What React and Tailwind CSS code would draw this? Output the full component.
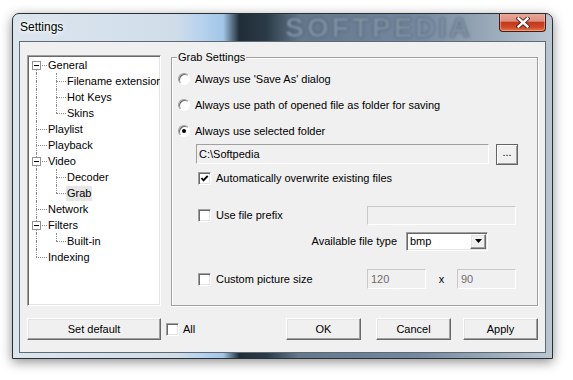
import React from "react";

const tree = [
  { label: "General", level: 0, expand: true, first: true },
  { label: "Filename extension", level: 1 },
  { label: "Hot Keys", level: 1 },
  { label: "Skins", level: 1, lastChild: true },
  { label: "Playlist", level: 0 },
  { label: "Playback", level: 0 },
  { label: "Video", level: 0, expand: true },
  { label: "Decoder", level: 1 },
  { label: "Grab", level: 1, lastChild: true, selected: true },
  { label: "Network", level: 0 },
  { label: "Filters", level: 0, expand: true },
  { label: "Built-in", level: 1, lastChild: true },
  { label: "Indexing", level: 0, last: true },
];

function Cell({ off, top, bottom, hor, horW, box }) {
  return (
    <div className="relative w-[19px] h-[16px] shrink-0">
      {top && (
        <span
          className="absolute top-0 h-[8px] w-0 border-l border-dotted border-[#8c8c8c]"
          style={{ left: off }}
        />
      )}
      {bottom && (
        <span
          className="absolute top-[8px] bottom-0 w-0 border-l border-dotted border-[#8c8c8c]"
          style={{ left: off }}
        />
      )}
      {hor && (
        <span
          className="absolute top-[8px] h-0 border-t border-dotted border-[#8c8c8c]"
          style={{ left: off, width: horW }}
        />
      )}
      {box && (
        <span className="absolute left-[4px] top-[4px] w-[9px] h-[9px] bg-white border border-[#919191]">
          <span className="absolute left-[1px] top-[3px] w-[5px] h-[1px] bg-black" />
        </span>
      )}
    </div>
  );
}

function TreeRow({ item }) {
  const { label, level, expand, first, last, lastChild, selected } = item;
  return (
    <div className="flex h-[16px] items-center">
      {level === 0 ? (
        <Cell off={8} top={!first} bottom={!last} hor horW={11} box={expand} />
      ) : (
        <Cell off={8} top bottom />
      )}
      {level === 1 && <Cell off={9} top bottom={!lastChild} hor horW={10} />}
      <span
        className={`px-[1px] h-[15px] leading-[15px] whitespace-nowrap ${
          selected ? "bg-[#e6e6e6]" : ""
        }`}
      >
        {label}
      </span>
    </div>
  );
}

function Radio({ checked }) {
  return (
    <span className="relative w-[12px] h-[12px] shrink-0 rounded-full bg-white border border-t-[#a0a0a0] border-l-[#a0a0a0] border-r-white border-b-white shadow-[inset_1px_1px_0_#696969]">
      {checked && (
        <span className="absolute left-[3px] top-[3px] w-[4px] h-[4px] rounded-full bg-black" />
      )}
    </span>
  );
}

function Check({ checked }) {
  return (
    <span className="relative w-[13px] h-[13px] shrink-0 bg-white border border-t-[#a0a0a0] border-l-[#a0a0a0] border-r-white border-b-white shadow-[inset_1px_1px_0_#696969,inset_-1px_-1px_0_#e3e3e3]">
      {checked && (
        <svg
          className="absolute left-[1px] top-[1px]"
          width="9"
          height="9"
          viewBox="0 0 9 9"
        >
          <path
            d="M1.5 4 L3.5 6.3 L7.7 1.8"
            stroke="#000"
            strokeWidth="1.9"
            fill="none"
          />
        </svg>
      )}
    </span>
  );
}

const raised =
  "border border-t-white border-l-white border-r-[#696969] border-b-[#696969] shadow-[inset_-1px_-1px_0_#a0a0a0,inset_1px_1px_0_#e3e3e3] bg-[#f0f0f0]";

const sunkenFlat =
  "border border-t-[#a0a0a0] border-l-[#a0a0a0] border-r-white border-b-white";

function Button({ children, className = "" }) {
  return (
    <div
      className={`h-[22px] flex items-center justify-center ${raised} ${className}`}
    >
      {children}
    </div>
  );
}

export default function App() {
  return (
    <div className="w-[573px] h-[380px] bg-white pl-[12px] pt-[13px] font-['Liberation_Sans',Arial,sans-serif] text-[11px] text-black overflow-hidden">
      <div className="w-[541px] h-[346px] rounded-t-[7px] border border-[#2a2f35] shadow-[0_3px_12px_rgba(0,0,0,0.45)] bg-[linear-gradient(90deg,#dbe5ee_0%,#d0dde9_30%,#b6d2ee_35%,#a2c6e8_39%,#1f2d37_42%,#2b3b47_47%,#63788b_53%,#7488a0_75%,#93a3b3_86%,#bac7d3_100%)] flex flex-col overflow-hidden">
        {/* title bar */}
        <div className="h-[27px] flex items-start relative">
          <span className="ml-[7px] mt-[5px] text-[12px] leading-[16px] text-black [text-shadow:0_0_6px_#fff,0_0_10px_#fff,0_0_3px_#fff]">
            Settings
          </span>
          <span className="ml-[222px] mt-[1px] text-[28px] leading-[26px] font-bold tracking-[3px] text-[#7d91a4] blur-[0.9px] [text-shadow:0_0_2px_#22303c]">
            SOFTPEDIA
          </span>
          <div className="ml-auto mr-[6px] -mt-[1px] w-[47px] h-[19px] rounded-b-[4px] border border-[#4a1a12] border-t-0 bg-[linear-gradient(180deg,#eaab9d_0%,#de907f_45%,#c23a1f_52%,#cf4727_78%,#e27a45_100%)] shadow-[inset_0_0_0_1px_rgba(255,210,200,0.45)] flex items-center justify-center">
            <svg width="14" height="11" viewBox="0 0 14 11">
              <path
                d="M2.5 1.5 L11.5 9.5 M11.5 1.5 L2.5 9.5"
                stroke="#4a1d16"
                strokeWidth="4.2"
                strokeLinecap="square"
              />
              <path
                d="M2.5 1.5 L11.5 9.5 M11.5 1.5 L2.5 9.5"
                stroke="#fff"
                strokeWidth="2.4"
                strokeLinecap="square"
              />
            </svg>
          </div>
        </div>

        {/* client */}
        <div className="mx-[6px] h-[312px] border border-[#5f6a75] bg-[#f0f0f0] flex flex-col pl-[7px] pt-[13px]">
          <div className="flex items-start">
            {/* tree */}
            <div className="w-[134px] h-[251px] bg-white border border-t-[#a0a0a0] border-l-[#a0a0a0] border-r-white border-b-white shadow-[inset_1px_1px_0_#696969,inset_-1px_-1px_0_#e3e3e3] pt-[1px] overflow-hidden">
              {tree.map((t) => (
                <TreeRow key={t.label} item={t} />
              ))}
            </div>

            {/* group box */}
            <div className="relative ml-[10px] mt-[2px] w-[367px] h-[249px] border border-[#a0a0a0] shadow-[inset_1px_1px_0_#fff,1px_1px_0_#fff] flex flex-col">
              <span className="absolute left-[5px] -top-[8px] px-[1px] bg-[#f0f0f0] leading-[14px]">
                Grab Settings
              </span>

              <div className="mt-[12px] h-[18px] flex items-center pl-[6px]">
                <Radio />
                <span className="ml-[5px]">Always use 'Save As' dialog</span>
              </div>
              <div className="mt-[8px] h-[18px] flex items-center pl-[6px]">
                <Radio />
                <span className="ml-[5px]">
                  Always use path of opened file as folder for saving
                </span>
              </div>
              <div className="mt-[8px] h-[18px] flex items-center pl-[6px]">
                <Radio checked />
                <span className="ml-[5px]">Always use selected folder</span>
              </div>

              <div className="mt-[4px] h-[20px] flex items-center pl-[24px]">
                <div
                  className={`w-[293px] h-[20px] ${sunkenFlat} bg-[#f0f0f0] flex items-center pl-[2px]`}
                >
                  C:\Softpedia
                </div>
                <div className="ml-[7px] w-[22px] h-[21px] flex items-center justify-center border border-[#646464] bg-[#f0f0f0] shadow-[inset_1px_1px_0_#fff,inset_-1px_-1px_0_#a0a0a0]">
                  <span className="-mt-[3px]">...</span>
                </div>
              </div>

              <div className="mt-[5px] h-[18px] flex items-center pl-[26px]">
                <Check checked />
                <span className="ml-[5px]">
                  Automatically overwrite existing files
                </span>
              </div>

              <div className="mt-[18px] h-[20px] flex items-center pl-[26px]">
                <div className="w-[169px] flex items-center">
                  <Check />
                  <span className="ml-[5px]">Use file prefix</span>
                </div>
                <div className="w-[149px] h-[19px] border border-[#c8c8c8] border-b-white border-r-white bg-[#f0f0f0]" />
              </div>

              <div className="mt-[6px] h-[20px] flex items-center justify-end pr-[49px]">
                <span>Available file type</span>
                <div className="ml-[9px] w-[82px] h-[19px] bg-white border border-t-[#a0a0a0] border-l-[#a0a0a0] border-r-white border-b-white shadow-[inset_1px_1px_0_#696969,inset_-1px_-1px_0_#e3e3e3] flex items-center pl-[3px] pr-[1px]">
                  <span className="flex-1">bmp</span>
                  <div
                    className={`w-[16px] h-[15px] ${raised} flex items-center justify-center`}
                  >
                    <svg width="7" height="4" viewBox="0 0 7 4">
                      <path d="M0 0 H7 L3.5 4 Z" fill="#000" />
                    </svg>
                  </div>
                </div>
              </div>

              <div className="mt-[18px] h-[20px] flex items-center pl-[26px]">
                <div className="w-[169px] flex items-center">
                  <Check />
                  <span className="ml-[5px]">Custom picture size</span>
                </div>
                <div className="w-[59px] h-[20px] border border-[#c8c8c8] border-b-white border-r-white bg-[#f0f0f0] text-[#6d6d6d] flex items-center pl-[3px]">
                  120
                </div>
                <span className="w-[31px] text-center">x</span>
                <div className="w-[59px] h-[20px] border border-[#c8c8c8] border-b-white border-r-white bg-[#f0f0f0] text-[#6d6d6d] flex items-center pl-[3px]">
                  90
                </div>
              </div>
            </div>
          </div>

          {/* bottom row */}
          <div className="mt-[12px] flex items-center pr-[7px]">
            <Button className="w-[134px]">Set default</Button>
            <div className="ml-[5px] flex items-center">
              <Check />
              <span className="ml-[4px]">All</span>
            </div>
            <Button className="ml-auto w-[75px]">OK</Button>
            <Button className="ml-[15px] w-[75px]">Cancel</Button>
            <Button className="ml-[12px] w-[75px]">Apply</Button>
          </div>
        </div>
      </div>
    </div>
  );
}
